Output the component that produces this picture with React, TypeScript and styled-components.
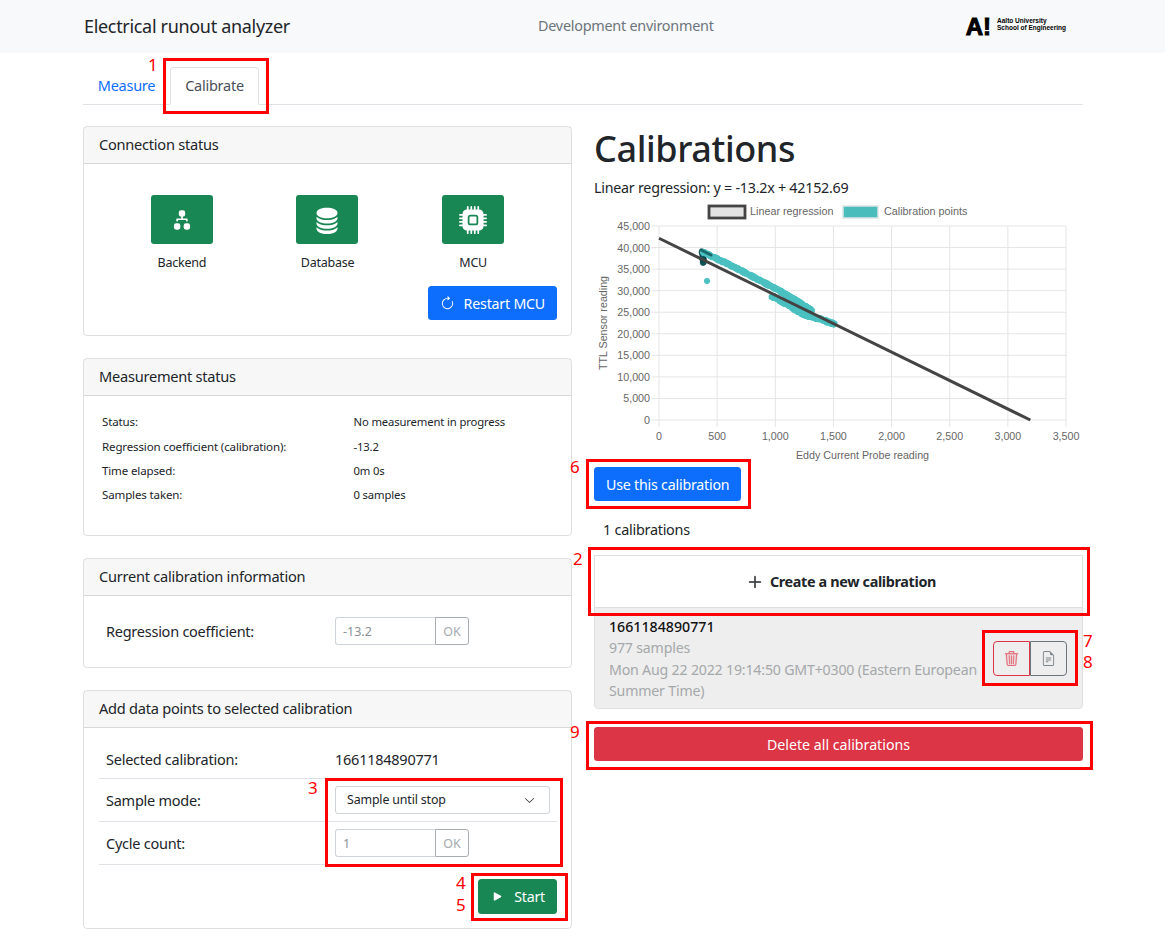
import React from "react";
import styled, { createGlobalStyle } from "styled-components";
import {
  BsArrowClockwise,
  BsChevronDown,
  BsCpuFill,
  BsDiagram2Fill,
  BsFileEarmarkText,
  BsFillDatabaseFill,
  BsPlayFill,
  BsPlusLg,
  BsTrash3,
} from "react-icons/bs";

const UI = '"Noto Sans", "Open Sans", sans-serif';

const Global = createGlobalStyle`
  html, body { margin: 0; padding: 0; background: #fff; }
  body {
    font-family: ${UI};
    font-size: 15px;
    line-height: 24px;
    letter-spacing: -0.25px;
    color: #212529;
  }
  * { box-sizing: border-box; }
`;

const Page = styled.div`
  position: relative;
  width: 1165px;
  height: 949px;
  overflow: hidden;
`;

const Header = styled.header`
  display: grid;
  grid-template-columns: 454px 175px 1fr;
  align-items: center;
  height: 53px;
  padding: 0 99px 2px 84px;
  background: #f8f9fa;
`;

const Brand = styled.div`
  font-size: 18px;
  letter-spacing: -0.32px;
  white-space: nowrap;
`;

const Env = styled.div`
  color: #6c757d;
  font-size: 14.4px;
  text-align: center;
  white-space: nowrap;
`;

const Logo = styled.div`
  display: flex;
  justify-content: flex-end;
  align-items: center;
  gap: 6px;
  margin-top: 2px;
  color: #000;
  font-family: "Liberation Sans", sans-serif;
  letter-spacing: 0;
`;

const LogoMark = styled.span`
  font-size: 24px;
  line-height: 25px;
  font-weight: 700;
  -webkit-text-stroke: 1px #000;
`;

const LogoText = styled.span`
  font-size: 6.5px;
  line-height: 7px;
  font-weight: 700;
  margin-top: -5px;
  white-space: nowrap;
`;

const Content = styled.main`
  width: 1000px;
  margin-left: 83px;
`;

const Tabs = styled.nav`
  display: flex;
  height: 38px;
  margin-top: 14px;
  border-bottom: 1px solid #dee2e6;
`;

const Tab = styled.div<{ $active?: boolean; $w: number }>`
  width: ${(p) => p.$w}px;
  height: 38px;
  font-size: 14.5px;
  line-height: 35px;
  text-align: center;
  color: ${(p) => (p.$active ? "#495057" : "#0d6efd")};
  background: ${(p) => (p.$active ? "#fff" : "transparent")};
  border: 1px solid ${(p) => (p.$active ? "#dee2e6" : "transparent")};
  border-bottom-color: ${(p) => (p.$active ? "#fff" : "transparent")};
  border-radius: 4px 4px 0 0;
`;

const Columns = styled.div`
  display: grid;
  grid-template-columns: 489px 489px;
  column-gap: 22px;
  margin-top: 21px;
`;

const LeftColumn = styled.div`
  display: flex;
  flex-direction: column;
  gap: 22px;
`;

const Card = styled.section<{ $h: number }>`
  height: ${(p) => p.$h}px;
  border: 1px solid rgba(0, 0, 0, 0.125);
  border-radius: 4px;
  display: flex;
  flex-direction: column;
`;

const CardHeader = styled.h2`
  margin: 0;
  height: 37px;
  padding: 0 15px;
  font-size: 14.6px;
  font-weight: 400;
  line-height: 35px;
  background: rgba(0, 0, 0, 0.03);
  border-bottom: 1px solid rgba(0, 0, 0, 0.125);
`;

const ConnectionBody = styled.div`
  padding: 31px 14px 0 15px;
`;

const StatusRow = styled.div`
  display: grid;
  grid-template-columns: repeat(3, 1fr);
  width: 437px;
  margin-left: 10px;
`;

const StatusItem = styled.div`
  display: flex;
  flex-direction: column;
  align-items: center;
  font-size: 12.5px;
`;

const StatusIcon = styled.div`
  width: 62px;
  height: 49px;
  display: flex;
  align-items: center;
  justify-content: center;
  border-radius: 3px;
  background: #198754;
  color: #fff;
  margin-bottom: 7px;
`;

const Button = styled.button<{ $bg: string; $h?: number }>`
  display: inline-flex;
  align-items: center;
  justify-content: center;
  height: ${(p) => p.$h ?? 34}px;
  padding: 0 12px;
  border: 0;
  border-radius: 3.5px;
  background: ${(p) => p.$bg};
  color: #fff;
  font-family: ${UI};
  font-size: 14.2px;
  letter-spacing: -0.2px;
  gap: 9px;
`;

const ButtonRow = styled.div`
  display: flex;
  justify-content: flex-end;
`;

const RestartWrap = styled(ButtonRow)`
  margin-top: 11px;
`;

const InfoGrid = styled.dl`
  display: grid;
  grid-template-columns: 251.5px 1fr;
  grid-auto-rows: 24.4px;
  align-items: center;
  margin: 0;
  padding: 14px 0 0 18px;
  font-size: 11.3px;
  letter-spacing: -0.15px;
`;

const InfoTerm = styled.dt`
  font-weight: 400;
  font-size: 11.55px;
`;
const InfoValue = styled.dd`
  margin: 0;
`;

const CoefRow = styled.div`
  display: grid;
  grid-template-columns: 229px auto;
  align-items: center;
  justify-content: start;
  padding: 21px 0 0 22px;
  font-size: 14.5px;
`;

const InputGroup = styled.div`
  display: flex;
  width: 134px;
  height: 28px;
`;

const NumberInput = styled.input`
  width: 100px;
  height: 28px;
  padding: 0 7px;
  border: 1px solid #ced4da;
  border-right: 0;
  border-radius: 3px 0 0 3px;
  background: #fff;
  color: #8a9096;
  font-family: ${UI};
  font-size: 12.5px;
  &::placeholder { color: #8a9096; opacity: 1; }
`;

const OkButton = styled.button`
  width: 34px;
  height: 28px;
  padding: 0;
  border: 1px solid #a8adb2;
  border-radius: 0 3px 3px 0;
  background: #fff;
  color: #a5a9ad;
  font-family: ${UI};
  font-size: 12.5px;
`;

const FormTable = styled.div`
  padding: 12px 14px 0 15px;
`;

const FormRow = styled.div<{ $h: number }>`
  display: grid;
  grid-template-columns: 229px 1fr;
  align-items: center;
  height: ${(p) => p.$h}px;
  padding: 0 7px;
  border-bottom: 1px solid #dee2e6;
  font-size: 14.5px;
`;

const FakeSelect = styled.div`
  display: flex;
  align-items: center;
  justify-content: space-between;
  width: 215px;
  height: 28px;
  padding: 0 14px 0 11px;
  border: 1px solid #ced4da;
  border-radius: 3px;
  font-size: 12.4px;
  letter-spacing: -0.15px;
`;

const StartWrap = styled(ButtonRow)`
  margin-top: 14px;
  padding-right: 14px;
`;

const RightColumn = styled.div`
  display: flex;
  flex-direction: column;
`;

const Title = styled.h1`
  margin: 0;
  height: 46px;
  font-size: 36px;
  line-height: 46px;
  font-weight: 500;
  letter-spacing: -0.4px;
`;

const Regression = styled.div`
  margin-top: 4px;
  font-size: 14.3px;
`;

const ChartSvg = styled.svg`
  display: block;
  width: 489px;
  height: 263px;
  margin: 2px 0;
  font-family: "Liberation Sans", sans-serif;
  letter-spacing: 0;
`;

const CalCount = styled.div`
  margin: 17px 0 0 9px;
  font-size: 14.4px;
`;

const List = styled.div`
  margin-top: 13px;
`;

const CreateItem = styled.div`
  display: flex;
  align-items: center;
  justify-content: center;
  gap: 7px;
  height: 53px;
  padding-left: 6px;
  border: 1px solid #dfdfdf;
  font-size: 14.4px;
  font-weight: 700;
  letter-spacing: -0.35px;
  svg { stroke: currentColor; stroke-width: 0.5px; }
`;

const CalItem = styled.div`
  display: flex;
  align-items: center;
  justify-content: space-between;
  height: 102px;
  margin-top: -1px;
  padding: 7px 15px 7px 14px;
  background: #eee;
  border: 1px solid #dfdfdf;
  border-radius: 0 0 4px 4px;
`;

const CalText = styled.div`
  width: 378px;
  padding-top: 1px;
  font-size: 14.2px;
  line-height: 21.5px;
  letter-spacing: -0.2px;
  color: #a5a8aa;
`;

const CalName = styled.div`
  color: #111;
  font-weight: 500;
  letter-spacing: 0;
`;

const IconGroup = styled.div`
  display: flex;
  margin-top: 1px;
`;

const IconButton = styled.div<{ $left?: boolean }>`
  display: flex;
  align-items: center;
  justify-content: center;
  width: 37px;
  height: 35px;
  color: ${(p) => (p.$left ? "#e2707c" : "#7d858c")};
  border: 1px solid ${(p) => (p.$left ? "#dc3545" : "#6c757d")};
  border-radius: ${(p) => (p.$left ? "4px 0 0 4px" : "0 4px 4px 0")};
  svg { stroke: currentColor; stroke-width: ${(p) => (p.$left ? "0.35px" : "0")}; }
`;

const DeleteWrap = styled.div`
  margin-top: 18px;
  display: flex;
`;

const Wide = styled(Button)`
  width: 489px;
  letter-spacing: 0;
`;

const UseWrap = styled.div`
  display: flex;
`;

const Mark = styled.div<{ $x: number; $y: number; $w: number; $h: number }>`
  position: absolute;
  left: ${(p) => p.$x}px;
  top: ${(p) => p.$y}px;
  width: ${(p) => p.$w}px;
  height: ${(p) => p.$h}px;
  border: 3px solid #f00;
  pointer-events: none;
`;

const MarkLabel = styled.span<{ $x: number; $y: number }>`
  position: absolute;
  left: ${(p) => p.$x}px;
  top: ${(p) => p.$y}px;
  color: #f00;
  font-size: 17px;
  line-height: 18px;
  letter-spacing: 0;
`;

const marks = [
  [163, 58, 106, 56],
  [586, 459, 165, 50],
  [588, 547, 502, 69],
  [325, 778, 238, 89],
  [471, 873, 97, 48],
  [982, 630, 96, 56],
  [586, 721, 507, 49],
];
const labels: [string, number, number][] = [
  ["1", 148, 56],
  ["6", 570, 458],
  ["2", 573, 550],
  ["3", 308, 779],
  ["4", 456, 874],
  ["5", 456, 896],
  ["7", 1083, 632],
  ["8", 1083, 653],
  ["9", 570, 723],
];

const X0 = 659;
const X1 = 1066;
const Y0 = 420;
const Y1 = 226;
const xTicks = [0, 500, 1000, 1500, 2000, 2500, 3000, 3500];
const yTicks = [0, 5000, 10000, 15000, 20000, 25000, 30000, 35000, 40000, 45000];
const px = (v: number) => X0 + (v * (X1 - X0)) / 3500;
const py = (v: number) => Y0 - (v * (Y0 - Y1)) / 45000;
const fmt = (v: number) => v.toLocaleString("en-US");

// Deterministic scatter that follows the measured band of samples.
const rand = (() => {
  let s = 12345;
  return () => {
    s = (s * 16807) % 2147483647;
    return s / 2147483647;
  };
})();

type P = [number, number];
const along = (path: P[], n: number, jitter: number): P[] => {
  const out: P[] = [];
  for (let i = 0; i < n; i++) {
    const t = rand() * (path.length - 1);
    const k = Math.min(Math.floor(t), path.length - 2);
    const f = t - k;
    out.push([
      path[k][0] + (path[k + 1][0] - path[k][0]) * f + (rand() - 0.5) * jitter,
      path[k][1] + (path[k + 1][1] - path[k][1]) * f + (rand() - 0.5) * jitter,
    ]);
  }
  return out;
};

const upperBand = along([[703, 252], [740, 270], [780, 291], [800, 303], [812, 311]], 320, 1.2);
const lowerBand = along([[772, 296], [790, 306], [805, 315], [820, 319], [834, 324]], 260, 2.2);
const darkSpot = along([[702, 251], [703, 258], [703, 264]], 26, 1.6);

function Chart() {
  return (
    <ChartSvg viewBox="594 202 489 263">
      <rect x={709} y={206} width={36} height={12} fill="#e3e3e3" stroke="#444" strokeWidth={2.8} />
      <text x={750} y={215} fontSize={10.8} fill="#666">Linear regression</text>
      <rect x={843} y={206} width={35} height={12} fill="#4bbcbc" stroke="#dde5e5" strokeWidth={1.5} />
      <text x={884} y={215} fontSize={10.8} fill="#666">Calibration points</text>
      {xTicks.map((t) => (
        <g key={t}>
          <line x1={px(t)} x2={px(t)} y1={Y1} y2={Y0 + 7} stroke="#e5e5e5" />
          <text x={px(t)} y={440} fontSize={10.7} fill="#666" textAnchor="middle">{fmt(t)}</text>
        </g>
      ))}
      {yTicks.map((t) => (
        <g key={t}>
          <line x1={X0 - 7} x2={X1} y1={py(t)} y2={py(t)} stroke="#e5e5e5" />
          <text x={650} y={py(t) + 4} fontSize={10.7} fill="#666" textAnchor="end">{fmt(t)}</text>
        </g>
      ))}
      <text x={862.5} y={459} fontSize={10.7} fill="#666" textAnchor="middle">Eddy Current Probe reading</text>
      <text transform="translate(607 323) rotate(-90)" fontSize={10.7} fill="#666" textAnchor="middle">TTL Sensor reading</text>

      {darkSpot.map(([x, y], i) => (
        <circle key={`d${i}`} cx={x} cy={y} r={2.8} fill="#0d5a5c" fillOpacity={0.55} stroke="#063436" strokeOpacity={0.5} strokeWidth={0.6} />
      ))}
      {upperBand.map(([x, y], i) => (
        <circle key={`u${i}`} cx={x} cy={y} r={3.1} fill="#4bc0c0" />
      ))}
      {lowerBand.map(([x, y], i) => (
        <circle key={`l${i}`} cx={x} cy={y} r={2.8} fill="#4bc0c0" />
      ))}
      <path d="M701 250L711 255" fill="none" stroke="#17696c" strokeWidth={3} strokeLinecap="round" />
      <circle cx={707} cy={281} r={3} fill="#4bc0c0" />
      <line x1={px(0)} y1={py(42152.69)} x2={px(3193.4)} y2={py(0)} stroke="#444" strokeWidth={3} />
    </ChartSvg>
  );
}

export default function App() {
  return (
    <Page>
      <Global />
      <Header>
        <Brand>Electrical runout analyzer</Brand>
        <Env>Development environment</Env>
        <Logo>
          <LogoMark>A!</LogoMark>
          <LogoText>
            Aalto University
            <br />
            School of Engineering
          </LogoText>
        </Logo>
      </Header>
      <Content>
        <Tabs>
          <Tab $w={87}>Measure</Tab>
          <Tab $active $w={89}>Calibrate</Tab>
        </Tabs>
        <Columns>
          <LeftColumn>
            <Card $h={210}>
              <CardHeader>Connection status</CardHeader>
              <ConnectionBody>
                <StatusRow>
                  <StatusItem>
                    <StatusIcon><BsDiagram2Fill size={26} /></StatusIcon>
                    Backend
                  </StatusItem>
                  <StatusItem>
                    <StatusIcon><BsFillDatabaseFill size={28} /></StatusIcon>
                    Database
                  </StatusItem>
                  <StatusItem>
                    <StatusIcon><BsCpuFill size={28} /></StatusIcon>
                    MCU
                  </StatusItem>
                </StatusRow>
                <RestartWrap>
                  <Button $bg="#0d6efd"><BsArrowClockwise size={15} />Restart MCU</Button>
                </RestartWrap>
              </ConnectionBody>
            </Card>
            <Card $h={178}>
              <CardHeader>Measurement status</CardHeader>
              <InfoGrid>
                <InfoTerm>Status:</InfoTerm>
                <InfoValue>No measurement in progress</InfoValue>
                <InfoTerm>Regression coefficient (calibration):</InfoTerm>
                <InfoValue>-13.2</InfoValue>
                <InfoTerm>Time elapsed:</InfoTerm>
                <InfoValue>0m 0s</InfoValue>
                <InfoTerm>Samples taken:</InfoTerm>
                <InfoValue>0 samples</InfoValue>
              </InfoGrid>
            </Card>
            <Card $h={110}>
              <CardHeader>Current calibration information</CardHeader>
              <CoefRow>
                Regression coefficient:
                <InputGroup>
                  <NumberInput readOnly placeholder="-13.2" />
                  <OkButton>OK</OkButton>
                </InputGroup>
              </CoefRow>
            </Card>
            <Card $h={239}>
              <CardHeader>Add data points to selected calibration</CardHeader>
              <FormTable>
                <FormRow $h={39}>
                  <span>Selected calibration:</span>
                  <span>1661184890771</span>
                </FormRow>
                <FormRow $h={43}>
                  <span>Sample mode:</span>
                  <FakeSelect>Sample until stop<BsChevronDown size={11} /></FakeSelect>
                </FormRow>
                <FormRow $h={43}>
                  <span>Cycle count:</span>
                  <InputGroup>
                    <NumberInput readOnly placeholder="1" />
                    <OkButton>OK</OkButton>
                  </InputGroup>
                </FormRow>
              </FormTable>
              <StartWrap>
                <Button $bg="#198754" $h={35}><BsPlayFill size={15} />Start</Button>
              </StartWrap>
            </Card>
          </LeftColumn>
          <RightColumn>
            <Title>Calibrations</Title>
            <Regression>Linear regression: y = -13.2x + 42152.69</Regression>
            <Chart />
            <UseWrap>
              <Button $bg="#0d6efd">Use this calibration</Button>
            </UseWrap>
            <CalCount>1 calibrations</CalCount>
            <List>
              <CreateItem><BsPlusLg size={16} />Create a new calibration</CreateItem>
              <CalItem>
                <CalText>
                  <CalName>1661184890771</CalName>
                  977 samples
                  <br />
                  Mon Aug 22 2022 19:14:50 GMT+0300 (Eastern European Summer Time)
                </CalText>
                <IconGroup>
                  <IconButton $left><BsTrash3 size={15} /></IconButton>
                  <IconButton><BsFileEarmarkText size={15} /></IconButton>
                </IconGroup>
              </CalItem>
            </List>
            <DeleteWrap>
              <Wide $bg="#dc3545">Delete all calibrations</Wide>
            </DeleteWrap>
          </RightColumn>
        </Columns>
      </Content>
      {marks.map(([x, y, w, h], i) => (
        <Mark key={i} $x={x} $y={y} $w={w} $h={h} />
      ))}
      {labels.map(([t, x, y]) => (
        <MarkLabel key={t} $x={x} $y={y}>{t}</MarkLabel>
      ))}
    </Page>
  );
}
